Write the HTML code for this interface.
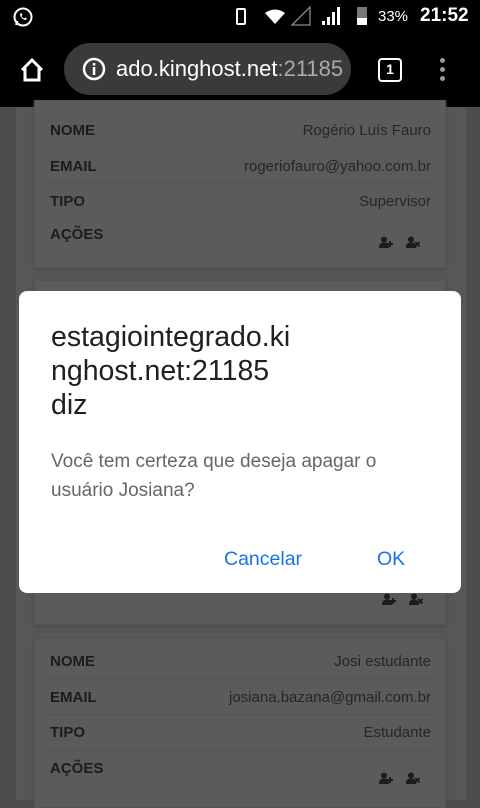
<!DOCTYPE html>
<html><head><style>
*{margin:0;padding:0;box-sizing:border-box}
body{width:480px;height:800px;overflow:hidden;background:#4d4d4d;font-family:"Liberation Sans",sans-serif;position:relative}
.sb{position:absolute;top:0;left:0;width:480px;height:36px;background:#000;color:#fff}
.tb{position:absolute;top:36px;left:0;width:480px;height:71px;background:#000}
.url{position:absolute;left:64px;top:7px;width:287px;height:52px;border-radius:26px;background:#3a3a3a;color:#fff;font-size:22px;line-height:52px;padding-left:52px;overflow:hidden;white-space:nowrap}
.wrap{position:absolute;left:16px;top:107px;width:450px;height:693px;background:#575757}
.card{position:absolute;left:34px;width:412px;background:#5b5b5b;border:1px solid #545454;box-shadow:0 2px 3px #4a4a4a}
.row{height:35.5px;margin:0 8px;border-bottom:1px solid #555;position:relative;font-size:15px;color:#1c1c1c}
.row b{position:absolute;left:7px;top:9px;font-weight:bold}
.row span{position:absolute;right:6px;top:9px;color:#262626}
.ic{position:absolute;right:14px;top:20px}
.dlg{position:absolute;left:19px;top:291px;width:442px;height:302px;background:#fff;border-radius:8px}
</style></head><body>
<svg width="0" height="0" style="position:absolute"><defs>
<g id="ua"><circle cx="5" cy="3.5" r="3" fill="#1c1c1c"/><path d="M0 12c0-4 2-5.5 5-5.5s5 1.5 5 5.5z" fill="#1c1c1c"/><path d="M11 5v6M8 8h6" stroke="#1c1c1c" stroke-width="2"/></g>
<g id="ux"><circle cx="5" cy="3.5" r="3" fill="#1c1c1c"/><path d="M0 12c0-4 2-5.5 5-5.5s5 1.5 5 5.5z" fill="#1c1c1c"/><path d="M9 6l4.5 4.5M13.5 6L9 10.5" stroke="#1c1c1c" stroke-width="2"/></g>
</defs></svg>
<div class="sb">
<svg style="position:absolute;left:12px;top:6px" width="22" height="22" viewBox="0 0 22 22"><circle cx="11" cy="11" r="8.5" fill="none" stroke="#fff" stroke-width="2"/><path d="M4 19l1.5-4" stroke="#fff" stroke-width="2"/><path d="M8 8c0 3 3 6 6 6l1-1.5-2-1-1 1c-1-.5-2-1.5-2.5-2.5l1-1-1-2z" fill="#fff"/></svg>
<div style="position:absolute;left:236px;top:8px;width:10px;height:17px;border:2px solid #fff;border-radius:2px"></div>
<svg style="position:absolute;left:265px;top:9px" width="20" height="15"><path d="M0 4Q10-3 20 4L10 15z" fill="#fff"/></svg>
<svg style="position:absolute;left:291px;top:6px" width="20" height="20"><path d="M1 19L19 1V19z" fill="none" stroke="#888" stroke-width="1.3"/></svg>
<svg style="position:absolute;left:322px;top:6px" width="20" height="20"><rect x="0" y="15" width="3" height="4" fill="#fff"/><rect x="5" y="11" width="3" height="8" fill="#fff"/><rect x="10" y="6" width="3" height="13" fill="#fff"/><rect x="15" y="1" width="3" height="18" fill="#fff"/></svg>
<div style="position:absolute;left:357px;top:7px;width:10px;height:18px;background:#777"><div style="position:absolute;bottom:0;width:10px;height:7px;background:#fff"></div></div>
<div style="position:absolute;left:378px;top:8px;font-size:15px">33%</div>
<div style="position:absolute;left:420px;top:5px;font-size:19px;font-weight:bold">21:52</div>
</div>
<div class="tb">
<svg style="position:absolute;left:18px;top:20px" width="28" height="28" viewBox="0 0 28 28"><path d="M4 14L14 4l10 10M7 12v12h14V12" fill="none" stroke="#fff" stroke-width="3"/></svg>
<div class="url"><svg style="position:absolute;left:18px;top:14px" width="24" height="24"><circle cx="12" cy="12" r="10" fill="none" stroke="#fff" stroke-width="2.5"/><rect x="10.8" y="10" width="2.5" height="8" fill="#fff"/><rect x="10.8" y="6" width="2.5" height="2.5" fill="#fff"/></svg>ado.kinghost.net<span style="color:#aaa">:21185</span></div>
<div style="position:absolute;left:378px;top:22px;width:24px;height:24px;border:2.5px solid #fff;border-radius:4px;color:#fff;font-size:14px;font-weight:bold;text-align:center;line-height:19px">1</div>
<div style="position:absolute;left:440px;top:22px;width:5px;height:5px;border-radius:50%;background:#999;box-shadow:0 9px 0 #999,0 18px 0 #999"></div>
</div>
<div class="wrap"></div>
<div class="card" style="top:100px;height:168px">
<div style="height:12px"></div>
<div class="row"><b>NOME</b><span>Rogério Luís Fauro</span></div>
<div class="row"><b>EMAIL</b><span>rogeriofauro@yahoo.com.br</span></div>
<div class="row"><b>TIPO</b><span>Supervisor</span></div>
<div class="row" style="height:44px;border:0"><b style="top:6px">AÇÕES</b><svg class="ic" style="top:16px" width="44" height="13"><use href="#ua"/><use href="#ux" x="27"/></svg></div>
</div>
<div class="card" style="top:280px;height:345px"></div>
<svg style="position:absolute;left:382px;top:593px" width="44" height="13"><use href="#ua"/><use href="#ux" x="27"/></svg>
<div class="card" style="top:638px;height:170px">
<div style="height:5px"></div>
<div class="row"><b>NOME</b><span>Josi estudante</span></div>
<div class="row"><b>EMAIL</b><span>josiana.bazana@gmail.com.br</span></div>
<div class="row"><b>TIPO</b><span>Estudante</span></div>
<div class="row" style="border:0"><b>AÇÕES</b><svg class="ic" style="top:21px" width="44" height="13"><use href="#ua"/><use href="#ux" x="27"/></svg></div>
</div>
<div class="dlg">
<div style="position:absolute;left:32px;top:29px;font-size:28.5px;line-height:34px;color:#202020">estagiointegrado.ki<br>nghost.net:21185<br>diz</div>
<div style="position:absolute;left:32px;top:156px;font-size:19px;line-height:29px;color:#666">Você tem certeza que deseja apagar o<br>usuário Josiana?</div>
<div style="position:absolute;left:205px;top:257px;font-size:19.5px;color:#1a73e8">Cancelar</div>
<div style="position:absolute;left:358px;top:257px;font-size:19.5px;color:#1a73e8">OK</div>
</div>
</body></html>
